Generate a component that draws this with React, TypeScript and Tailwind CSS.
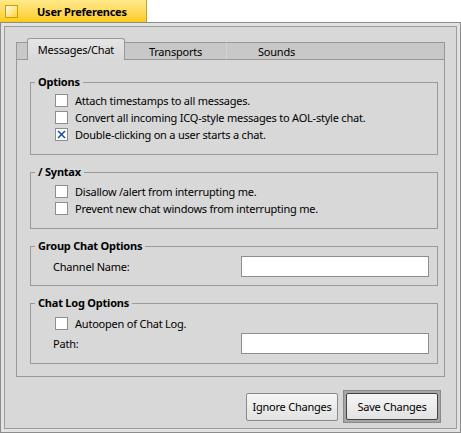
import React from "react";

function Check({ checked = false, label }: { checked?: boolean; label: string }) {
  return (
    <div className="h-[17px] flex items-center pl-[24px]">
      <div className="w-[13px] h-[13px] border border-[#8e8e8e] bg-white flex items-center justify-center">
        {checked && (
          <svg width="11" height="11" viewBox="0 0 11 11">
            <line x1="2" y1="2" x2="9" y2="9" stroke="#1d4f9e" strokeWidth="1.6" />
            <line x1="9" y1="2" x2="2" y2="9" stroke="#1d4f9e" strokeWidth="1.6" />
          </svg>
        )}
      </div>
      <span className="ml-[7px] leading-none">{label}</span>
    </div>
  );
}

function Box({ title, className = "", children }: { title: string; className?: string; children: React.ReactNode }) {
  return (
    <fieldset className={"border border-[#9a9a9a] " + className}>
      <legend className="ml-[4px] px-[3px] font-bold leading-[16px]">{title}</legend>
      {children}
    </fieldset>
  );
}

function Field({ label, className = "" }: { label: string; className?: string }) {
  return (
    <div className={"flex items-center justify-between pl-[22px] pr-[8px] " + className}>
      <span className="leading-none">{label}</span>
      <div className="w-[188px] h-[21px] border border-[#8e8e8e] bg-white" />
    </div>
  );
}

export default function App() {
  return (
    <div className="w-[461px] h-[433px] bg-white font-['Noto_Sans',sans-serif] text-[11px] tracking-[-0.22px] text-black">
      <div className="w-[147px] h-[22px] flex items-center bg-gradient-to-b from-[#ffe98a] to-[#ffcb00] border-r border-[#d0a400]">
        <div className="ml-[5px] w-[13px] h-[13px] border border-[#c9a000] bg-gradient-to-br from-[#fffbe2] to-[#ffd000]" />
        <span className="ml-[19px] font-bold leading-none">User Preferences</span>
      </div>
      <div className="h-[411px] border border-[#8c8c8c] bg-[#e2e2e2] p-[3px]">
        <div className="h-full border border-[#9c9c9c] bg-[#d8d8d8] flex flex-col pl-[11px] pt-[11px]">
          <div className="w-[429px] flex flex-col">
            <div className="h-[22px] flex items-end">
              <div className="w-[11px] h-[18px] bg-[#c8c8c8] border-l border-t border-b border-[#989898]" />
              <div className="w-[98px] h-[22px] border-l border-t border-r border-[#989898] rounded-t-[3px] bg-gradient-to-b from-[#e6e6e6] to-[#d8d8d8] flex items-center justify-center leading-none">
                Messages/Chat
              </div>
              <div className="w-[102px] h-[18px] bg-[#c8c8c8] border-t border-b border-r border-[#989898] border-r-[#d2d2d2] flex items-center justify-center leading-none">
                Transports
              </div>
              <div className="w-[99px] h-[18px] bg-[#c8c8c8] border-t border-b border-[#989898] flex items-center justify-center leading-none">
                Sounds
              </div>
              <div className="flex-1 h-[18px] bg-[#c8c8c8] border-t border-b border-r border-[#989898]" />
            </div>
            <div className="h-[317px] border-l border-r border-b border-[#989898] bg-[#d8d8d8] pl-[13px] pr-[6px] pt-[14px] flex flex-col">
              <Box title="Options" className="pb-[11px]">
                <div className="mt-[2px]">
                  <Check label="Attach timestamps to all messages." />
                  <Check label="Convert all incoming ICQ-style messages to AOL-style chat." />
                  <Check checked label="Double-clicking on a user starts a chat." />
                </div>
              </Box>
              <Box title="/ Syntax" className="mt-[9px] pb-[11px]">
                <div className="mt-[3px]">
                  <Check label="Disallow /alert from interrupting me." />
                  <Check label="Prevent new chat windows from interrupting me." />
                </div>
              </Box>
              <Box title="Group Chat Options" className="mt-[9px] pb-[8px]">
                <Field label="Channel Name:" className="mt-[2px]" />
              </Box>
              <Box title="Chat Log Options" className="mt-[9px] pb-[9px]">
                <div className="mt-[4px]">
                  <Check label="Autoopen of Chat Log." />
                </div>
                <Field label="Path:" className="mt-[1px]" />
              </Box>
            </div>
          </div>
          <div className="mt-[13px] h-[33px] flex justify-end items-center gap-[5px] pr-[15px]">
            <div className="w-[92px] h-[28px] border border-[#8a8a8a] rounded-[2px] bg-gradient-to-b from-[#f6f6f6] to-[#e2e2e2] flex items-center justify-center leading-none">
              Ignore Changes
            </div>
            <div className="w-[98px] h-[33px] border border-[#8a8a8a] bg-[#a6a6a6] p-[2px]">
              <div className="w-full h-full border border-[#444444] rounded-[2px] bg-gradient-to-b from-[#f6f6f6] to-[#e2e2e2] flex items-center justify-center leading-none">
                Save Changes
              </div>
            </div>
          </div>
        </div>
      </div>
    </div>
  );
}
